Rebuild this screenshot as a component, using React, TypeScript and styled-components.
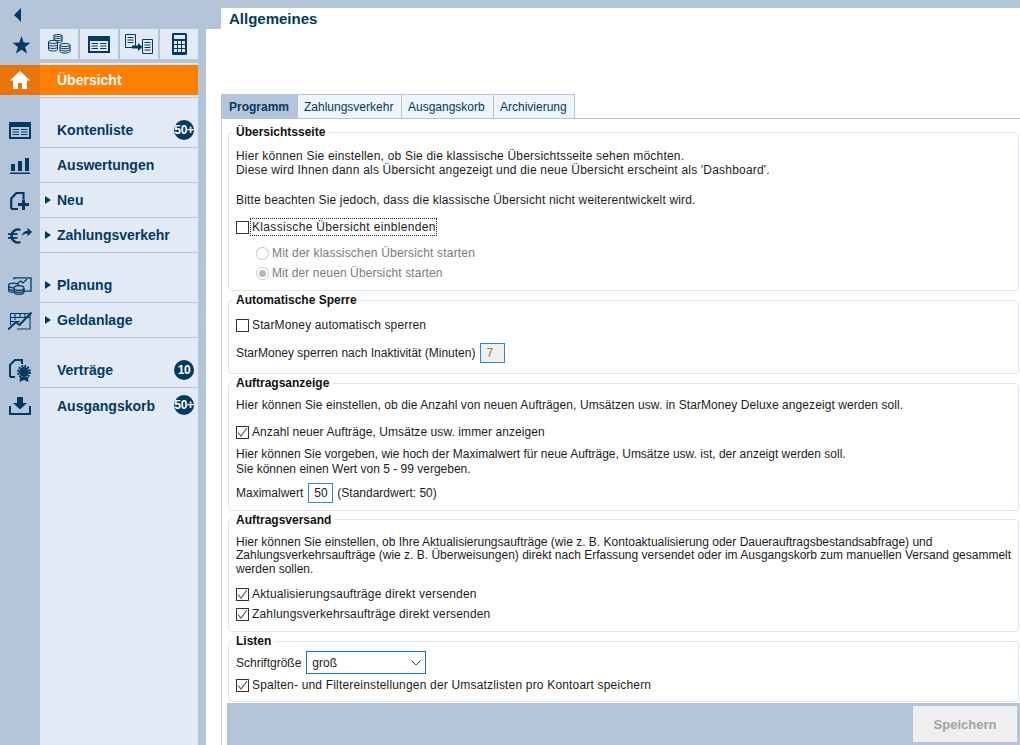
import { ReactNode } from "react";
import styled, { createGlobalStyle } from "styled-components";

const NAVY = "#003a63";
const BLUE = "#b4c5da";
const LIGHT = "#e2eaf5";

const GlobalStyle = createGlobalStyle`
  html, body {
    margin: 0;
    height: 100%;
    overflow: hidden;
    background: ${BLUE};
  }
  #root {
    height: 745px;
  }
  * {
    box-sizing: border-box;
  }
`;

const Page = styled.div`
  display: flex;
  width: 1020px;
  height: 745px;
  background: ${BLUE};
  font-family: "Liberation Sans", Arial, sans-serif;
  font-size: 12px;
  color: #1c1c1c;
`;

const Rail = styled.div`
  flex: 0 0 40px;
  display: flex;
  flex-direction: column;
`;

const RailCell = styled.div<{ $h?: number; $active?: boolean; $after?: number }>`
  height: ${(p) => p.$h ?? 35}px;
  margin-bottom: ${(p) => p.$after ?? 0}px;
  display: flex;
  align-items: center;
  justify-content: center;
  background: ${(p) => (p.$active ? "#e8750a" : "transparent")};
  color: ${NAVY};
`;

const CollapseCell = styled(RailCell)`
  padding-right: 5px;
`;

const StarCell = styled(RailCell)`
  padding: 0 0 4px 2px;
`;

const Side = styled.div`
  flex: 0 0 158px;
  display: flex;
  flex-direction: column;
  padding-top: 29px;
`;

const Tiles = styled.div`
  display: flex;
  gap: 2px;
  height: 30px;
  margin-bottom: 4px;
`;

const Tile = styled.div`
  flex: 1;
  display: flex;
  align-items: center;
  justify-content: center;
  background: ${LIGHT};
  color: ${NAVY};
`;

const Nav = styled.nav`
  flex: 1;
  background: ${LIGHT};
  padding-top: 2px;
`;

const ActiveItem = styled.div`
  height: 30px;
  display: flex;
  align-items: center;
  padding-left: 17px;
  background: #ff7f00;
  color: #fff;
  font-size: 14px;
  font-weight: 700;
`;

const ActiveRule = styled.div`
  height: 3px;
  margin-bottom: 15px;
  border-bottom: 1px solid ${BLUE};
`;

const NavItem = styled.div<{ $after?: number; $plain?: boolean }>`
  position: relative;
  height: 35px;
  margin-bottom: ${(p) => p.$after ?? 0}px;
  display: flex;
  align-items: center;
  padding-left: 17px;
  border-bottom: ${(p) => (p.$plain ? "none" : `1px solid ${BLUE}`)};
  color: ${NAVY};
  font-size: 14px;
  font-weight: 700;
`;

const Caret = styled.span`
  position: absolute;
  left: 5px;
  top: 13px;
  border-left: 6px solid ${NAVY};
  border-top: 4px solid transparent;
  border-bottom: 4px solid transparent;
`;

const Badge = styled.span`
  position: absolute;
  left: 134px;
  top: 7px;
  width: 20px;
  height: 20px;
  border-radius: 50%;
  background: ${NAVY};
  color: #fff;
  font-size: 12px;
  letter-spacing: -0.3px;
  display: flex;
  align-items: center;
  justify-content: center;
  white-space: nowrap;
`;

const Main = styled.main`
  flex: 1;
  min-width: 0;
  margin-left: 8px;
  padding-top: 8px;
  display: flex;
  flex-direction: column;
`;

const TitleBar = styled.div`
  height: 21px;
  padding-left: 15px;
`;

const Title = styled.h1`
  margin: 0;
  height: 21px;
  background: #fff;
  padding: 3px 0 0 8px;
  font-size: 15px;
  line-height: 16px;
  font-weight: 700;
  color: ${NAVY};
`;

const Body = styled.div`
  flex: 1;
  min-height: 0;
  background: #fff;
  padding: 65px 0 0 15px;
  display: flex;
  flex-direction: column;
`;

const TabBar = styled.div`
  display: flex;
  height: 25px;
  border-bottom: 1px solid ${BLUE};
`;

const Tab = styled.div<{ $active?: boolean; $w: number }>`
  width: ${(p) => p.$w}px;
  height: 25px;
  display: flex;
  align-items: center;
  padding-left: ${(p) => (p.$active ? 7 : 6)}px;
  margin-right: -1px;
  border: 1px solid ${BLUE};
  background: ${(p) => (p.$active ? BLUE : "#eff4fa")};
  color: ${NAVY};
  font-weight: ${(p) => (p.$active ? 700 : 400)};
`;

const Pane = styled.div`
  flex: 1;
  min-height: 0;
  border-left: 1px solid #c3ccd8;
  padding-left: 5px;
  display: flex;
  flex-direction: column;
`;

const Group = styled.fieldset<{ $h: number; $top: number }>`
  height: ${(p) => p.$h}px;
  margin: ${(p) => p.$top}px 1px 0 1px;
  padding: 0 7px;
  min-width: 0;
  border: 1px solid #dbe4ef;
  border-radius: 4px;
`;

const Legend = styled.legend`
  padding: 0 4px;
  margin-left: -4px;
  height: 14px;
  line-height: 14px;
  font-weight: 700;
  color: #111;
`;

const Para = styled.p<{ $top: number; $lh?: number; $ls?: number }>`
  margin: ${(p) => p.$top}px 0 0;
  line-height: ${(p) => p.$lh ?? 15}px;
  letter-spacing: ${(p) => p.$ls ?? 0}px;
  white-space: pre;
`;

const CheckRow = styled.label<{ $top: number; $ls?: number }>`
  display: flex;
  align-items: center;
  height: 16px;
  gap: 3px;
  margin-top: ${(p) => p.$top}px;
  letter-spacing: ${(p) => p.$ls ?? 0}px;
`;

const Box = styled.span`
  flex: 0 0 13px;
  width: 13px;
  height: 13px;
  border: 1px solid #333;
  background: #fff;
  display: flex;
  align-items: center;
  justify-content: center;
`;

const FocusText = styled.span`
  outline: 1px dotted #222;
  margin-left: -1px;
  padding-left: 1px;
  height: 16px;
  line-height: 16px;
`;

const RadioRow = styled.label<{ $top: number; $ls?: number }>`
  display: flex;
  align-items: center;
  gap: 3px;
  height: 16px;
  margin: ${(p) => p.$top}px 0 0 20px;
  color: #7a7a7a;
  letter-spacing: ${(p) => p.$ls ?? 0}px;
`;

const Radio = styled.span<{ $on?: boolean }>`
  width: 13px;
  height: 13px;
  border-radius: 50%;
  border: 1px solid #c4c4c4;
  background: #fff;
  display: flex;
  align-items: center;
  justify-content: center;
  &::after {
    content: "";
    display: ${(p) => (p.$on ? "block" : "none")};
    width: 7px;
    height: 7px;
    border-radius: 50%;
    background: #b8b8b8;
  }
`;

const FieldRow = styled.div<{ $top: number }>`
  display: flex;
  align-items: center;
  gap: 5px;
  margin-top: ${(p) => p.$top}px;
`;

const NumberBox = styled.div<{ $off?: boolean }>`
  width: 25px;
  height: 20px;
  margin-right: -1px;
  border: 1px solid #2f86cf;
  background: ${(p) => (p.$off ? "#efefef" : "#fff")};
  color: ${(p) => (p.$off ? "#7a7a7a" : "#1c1c1c")};
  display: flex;
  align-items: center;
  padding-left: 5px;
`;

const Select = styled.div`
  width: 120px;
  height: 23px;
  border: 1px solid #0f76c6;
  display: flex;
  align-items: center;
  justify-content: space-between;
  padding: 0 3px 0 5px;
`;

const Footer = styled.div`
  height: 42px;
  margin-top: 1px;
  background: ${BLUE};
  display: flex;
  justify-content: flex-end;
  padding: 3px 3px 0 0;
`;

const SaveButton = styled.div`
  width: 104px;
  height: 36px;
  background: #efefef;
  color: #a2a2a2;
  font-size: 13px;
  font-weight: 700;
  display: flex;
  align-items: center;
  justify-content: center;
`;

/* icons */
const CollapseIcon = () => (
  <svg width="8" height="14" viewBox="0 0 8 14">
    <path d="M7 0v14L0 7z" fill={NAVY} />
  </svg>
);

const StarIcon = () => (
  <svg width="19" height="18" viewBox="0 0 18 18">
    <path d="M9 0l2.2 6.5 6.8.2-5.400 4.200 2 6.700L9 13.700l-5.600 3.900 2-6.700L0 6.700l6.800-.2z" fill={NAVY} />
  </svg>
);

const HomeIcon = () => (
  <svg width="20" height="18" viewBox="0 0 20 18">
    <path d="M10 0l10 9.400h-3V18h-5v-6H8v6H3V9.400H0z" fill="#fff" />
  </svg>
);

const ListIcon = ({ bg }: { bg: string }) => (
  <svg width="22" height="17" viewBox="0 0 22 17">
    <rect width="22" height="17" fill={NAVY} />
    <rect x="2" y="5" width="18" height="10" fill={bg} />
    <path d="M3.500 7.500h6.500M12 7.500h6.500M3.500 10h6.500M12 10h6.500M3.500 12.500h6.500M12 12.500h6.500" stroke={NAVY} strokeWidth="1" />
  </svg>
);

const BarsIcon = () => (
  <svg width="20" height="16" viewBox="0 0 20 16">
    <path d="M1 6h4v7H1zM8 3h4v10H8zM15 0h4v13h-4zM0 14.500h20v1.500H0z" fill={NAVY} />
  </svg>
);

const NewDocIcon = () => (
  <svg width="20" height="18" viewBox="0 0 20 18">
    <path d="M1.200 17V6.500L6.500 1h7v6M8 17H1.200" fill="none" stroke={NAVY} strokeWidth="2.200" />
    <path d="M12 7.500h3V11h4v3h-4v4h-3v-4H8v-3h4z" fill={NAVY} />
  </svg>
);

const EuroIcon = () => (
  <svg width="24" height="18" viewBox="0 0 24 18">
    <path d="M12.500 3A6.500 7 0 0 0 3.500 9a6.500 7 0 0 0 9 6" fill="none" stroke={NAVY} strokeWidth="2.400" />
    <path d="M0 7.200h9.500M0 10.800h9.500" stroke={NAVY} strokeWidth="1.800" />
    <path d="M14 9c.3-3.500 2.500-5 5.500-5V.8l4.500 4.200-4.500 4.200V6.600c-2.500 0-4 .7-5.500 2.400z" fill={NAVY} />
  </svg>
);

const PlanIcon = () => (
  <svg width="24" height="18" viewBox="0 0 24 18">
    <path d="M6 2.500V.8h17v13.400h-9" fill="none" stroke={NAVY} strokeWidth="1.300" />
    <path d="M9 7l3.500-3 2.500 2 4-4" fill="none" stroke={NAVY} strokeWidth="1.300" />
    <ellipse cx="5.500" cy="8.500" rx="5" ry="2.300" fill={BLUE} stroke={NAVY} strokeWidth="1.200" />
    <path d="M.5 8.500v4.500c0 1.300 2.200 2.300 5 2.300M.5 11c0 1.300 2.200 2.300 5 2.300" fill="none" stroke={NAVY} strokeWidth="1.200" />
    <ellipse cx="11" cy="11" rx="5" ry="2.300" fill={BLUE} stroke={NAVY} strokeWidth="1.200" />
    <path d="M6 11v4c0 1.300 2.200 2.300 5 2.300s5-1 5-2.300v-4M6 13c0 1.300 2.200 2.300 5 2.300s5-1 5-2.300" fill="none" stroke={NAVY} strokeWidth="1.200" />
  </svg>
);

const GrowthIcon = () => (
  <svg width="24" height="18" viewBox="0 0 24 18">
    <path d="M2.500 13V1.500H22V17H9M2.500 5.500H22M2.500 9.500H12M7 1.500V8M12 1.500V6M17 1.500V5.500" fill="none" stroke={NAVY} strokeWidth="1.100" />
    <path d="M0 17.500L8 10l3.500 3L23.500 .5" fill="none" stroke={NAVY} strokeWidth="2" />
  </svg>
);

const ContractIcon = () => (
  <svg width="22" height="23" viewBox="0 0 22 23">
    <path d="M1 18V6l5-5h7v4M6 18H1" fill="none" stroke={NAVY} strokeWidth="2" />
    <circle cx="15" cy="13" r="5" fill={NAVY} />
    <circle cx="15" cy="13" r="6" fill="none" stroke={NAVY} strokeWidth="2" strokeDasharray="2 1.100" />
    <path d="M11 18l-.5 5 4.500-2 4.500 2-.5-5z" fill={NAVY} />
  </svg>
);

const TrayIcon = () => (
  <svg width="22" height="18" viewBox="0 0 22 18">
    <path d="M8 0h6v6h4l-7 6.500L4 6h4z" fill={NAVY} />
    <path d="M1 9v8h20V9" fill="none" stroke={NAVY} strokeWidth="2" />
  </svg>
);

const CoinsIcon = () => (
  <svg width="23" height="20" viewBox="0 0 23 20">
    <g fill={LIGHT} stroke={NAVY} strokeWidth="1">
      <path d="M6 1.500c0-.8 1.800-1 4-1s4 .2 4 1v6c0 .8-1.800 1-4 1s-4-.2-4-1z" />
      <path d="M6 3.500c0 .8 1.800 1 4 1s4-.2 4-1M6 5.500c0 .8 1.800 1 4 1s4-.2 4-1M6 1.500c0 .8 1.800 1 4 1s4-.2 4-1" fill="none" />
      <path d="M.5 8c0-.9 2-1.500 4.500-1.500S9.500 7.100 9.500 8v7.500C9.500 16.400 7.500 17 5 17s-4.500-.6-4.500-1.500z" />
      <path d="M.5 8c0 .9 2 1.500 4.500 1.500S9.500 8.900 9.500 8M.5 10.500c0 .9 2 1.500 4.500 1.500s4.500-.6 4.500-1.500M.5 13c0 .9 2 1.500 4.500 1.500s4.500-.6 4.500-1.500" fill="none" />
      <path d="M12 11c0-.9 2.200-1.500 5-1.500s5 .6 5 1.500v6.500c0 .9-2.200 1.500-5 1.500s-5-.6-5-1.500z" />
      <path d="M12 11c0 .9 2.200 1.500 5 1.500s5-.6 5-1.500M12 13.200c0 .9 2.200 1.500 5 1.500s5-.6 5-1.500M12 15.400c0 .9 2.200 1.500 5 1.500s5-.6 5-1.500" fill="none" />
    </g>
  </svg>
);

const TransferIcon = () => (
  <svg width="28" height="20" viewBox="0 0 28 20">
    <g fill="none" stroke={NAVY} strokeWidth="1">
      <path d="M.5.500h10v13H.5zM2.500 3.500h6M2.500 6h6M2.500 8.500h6" />
      <path d="M17.500 5.500h10v14h-10zM19.500 8.500h6M19.500 11h6M19.500 13.500h6M19.500 16h6" />
    </g>
    <path d="M7 11.500h6V9l4.500 4-4.500 4v-2.500H7z" fill={NAVY} />
  </svg>
);

const CalcIcon = () => (
  <svg width="15" height="22" viewBox="0 0 15 22">
    <rect width="15" height="22" rx="1.500" fill={NAVY} />
    <rect x="2" y="2" width="11" height="4" fill={LIGHT} />
    <path d="M2 8h3v3H2zM6 8h3v3H6zM10 8h3v3h-3zM2 12h3v3H2zM6 12h3v3H6zM10 12h3v3h-3zM2 16h3v3H2zM6 16h3v3H6zM10 16h3v3h-3z" fill={LIGHT} />
  </svg>
);

const Tick = () => (
  <svg width="11" height="11" viewBox="0 0 11 11">
    <path d="M1 5.500l3 3.500 6-8" fill="none" stroke="#555" strokeWidth="1.100" />
  </svg>
);

const Chevron = () => (
  <svg width="12" height="8" viewBox="0 0 12 8">
    <path d="M1.500 1.500L6 6l4.500-4.500" fill="none" stroke="#444" strokeWidth="1" />
  </svg>
);

function Check({ on, top, ls, children }: { on?: boolean; top: number; ls?: number; children: ReactNode }) {
  return (
    <CheckRow $top={top} $ls={ls}>
      <Box>{on && <Tick />}</Box>
      {children}
    </CheckRow>
  );
}

function App() {
  return (
    <Page>
      <GlobalStyle />
      <Rail>
        <CollapseCell $h={29}><CollapseIcon /></CollapseCell>
        <StarCell $h={36}><StarIcon /></StarCell>
        <RailCell $h={30} $active $after={18}><HomeIcon /></RailCell>
        <RailCell><ListIcon bg={BLUE} /></RailCell>
        <RailCell><BarsIcon /></RailCell>
        <RailCell><NewDocIcon /></RailCell>
        <RailCell $after={15}><EuroIcon /></RailCell>
        <RailCell><PlanIcon /></RailCell>
        <RailCell $after={15}><GrowthIcon /></RailCell>
        <RailCell><ContractIcon /></RailCell>
        <RailCell><TrayIcon /></RailCell>
      </Rail>

      <Side>
        <Tiles>
          <Tile><CoinsIcon /></Tile>
          <Tile><ListIcon bg={LIGHT} /></Tile>
          <Tile><TransferIcon /></Tile>
          <Tile><CalcIcon /></Tile>
        </Tiles>
        <Nav>
          <ActiveItem>Übersicht</ActiveItem>
          <ActiveRule />
          <NavItem>Kontenliste<Badge>50+</Badge></NavItem>
          <NavItem>Auswertungen</NavItem>
          <NavItem><Caret />Neu</NavItem>
          <NavItem $after={15}><Caret />Zahlungsverkehr</NavItem>
          <NavItem><Caret />Planung</NavItem>
          <NavItem $after={15}><Caret />Geldanlage</NavItem>
          <NavItem>Verträge<Badge>10</Badge></NavItem>
          <NavItem $plain>Ausgangskorb<Badge>50+</Badge></NavItem>
        </Nav>
      </Side>

      <Main>
        <TitleBar><Title>Allgemeines</Title></TitleBar>
        <Body>
          <TabBar>
            <Tab $active $w={77}>Programm</Tab>
            <Tab $w={105}>Zahlungsverkehr</Tab>
            <Tab $w={93}>Ausgangskorb</Tab>
            <Tab $w={82}>Archivierung</Tab>
          </TabBar>
          <Pane>
            <Group $top={6} $h={167}>
              <Legend>Übersichtsseite</Legend>
              <Para $top={10} $lh={14} $ls={0.2}>{"Hier können Sie einstellen, ob Sie die klassische Übersichtsseite sehen möchten.\nDiese wird Ihnen dann als Übersicht angezeigt und die neue Übersicht erscheint als 'Dashboard'."}</Para>
              <Para $top={16} $lh={14} $ls={0.165}>Bitte beachten Sie jedoch, dass die klassische Übersicht nicht weiterentwickelt wird.</Para>
              <Check top={12} ls={0.33}><FocusText>Klassische Übersicht einblenden</FocusText></Check>
              <RadioRow $top={10} $ls={0.19}><Radio />Mit der klassischen Übersicht starten</RadioRow>
              <RadioRow $top={4} $ls={0.1}><Radio $on />Mit der neuen Übersicht starten</RadioRow>
            </Group>
            <Group $top={2} $h={81}>
              <Legend>Automatische Sperre</Legend>
              <Check top={10} ls={0.14}>StarMoney automatisch sperren</Check>
              <FieldRow $top={10}>StarMoney sperren nach Inaktivität (Minuten)<NumberBox $off>7</NumberBox></FieldRow>
            </Group>
            <Group $top={2} $h={135}>
              <Legend>Auftragsanzeige</Legend>
              <Para $top={8} $ls={0.08}>Hier können Sie einstellen, ob die Anzahl von neuen Aufträgen, Umsätzen usw. in StarMoney Deluxe angezeigt werden soll.</Para>
              <Check on top={11} ls={0.08}>Anzahl neuer Aufträge, Umsätze usw. immer anzeigen</Check>
              <Para $top={7}>{"Hier können Sie vorgeben, wie hoch der Maximalwert für neue Aufträge, Umsätze usw. ist, der anzeigt werden soll.\nSie können einen Wert von 5 - 99 vergeben."}</Para>
              <FieldRow $top={6}>Maximalwert<NumberBox>50</NumberBox>(Standardwert: 50)</FieldRow>
            </Group>
            <Group $top={2} $h={120}>
              <Legend>Auftragsversand</Legend>
              <Para $top={9} $lh={13.5}>{"Hier können Sie einstellen, ob Ihre Aktualisierungsaufträge (wie z. B. Kontoaktualisierung oder Dauerauftragsbestandsabfrage) und\nZahlungsverkehrsaufträge (wie z. B. Überweisungen) direkt nach Erfassung versendet oder im Ausgangskorb zum manuellen Versand gesammelt\nwerden sollen."}</Para>
              <Check on top={10} ls={0.18}>Aktualisierungsaufträge direkt versenden</Check>
              <Check on top={4} ls={0.17}>Zahlungsverkehrsaufträge direkt versenden</Check>
            </Group>
            <Group $top={2} $h={68}>
              <Legend>Listen</Legend>
              <FieldRow $top={3}>Schriftgröße<Select>groß<Chevron /></Select></FieldRow>
              <Check on top={3} ls={0.18}>Spalten- und Filtereinstellungen der Umsatzlisten pro Kontoart speichern</Check>
            </Group>
            <Footer><SaveButton>Speichern</SaveButton></Footer>
          </Pane>
        </Body>
      </Main>
    </Page>
  );
}

export default App;
